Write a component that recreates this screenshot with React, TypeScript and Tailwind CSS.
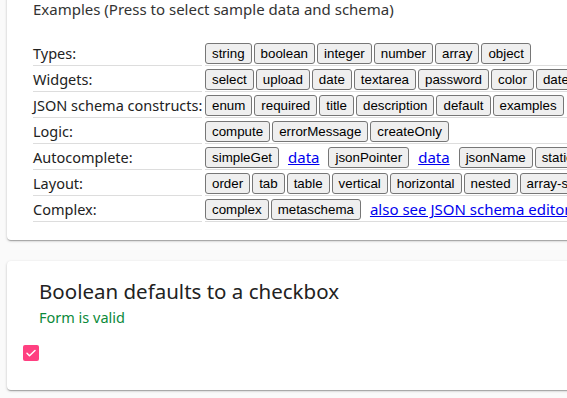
import React from "react";

type Item = { label: string; link?: boolean };

const rows: { name: string; items: Item[] }[] = [
  { name: "Types:", items: ["string", "boolean", "integer", "number", "array", "object"].map((l) => ({ label: l })) },
  { name: "Widgets:", items: ["select", "upload", "date", "textarea", "password", "color", "datetime", "time"].map((l) => ({ label: l })) },
  { name: "JSON schema constructs:", items: ["enum", "required", "title", "description", "default", "examples"].map((l) => ({ label: l })) },
  { name: "Logic:", items: ["compute", "errorMessage", "createOnly"].map((l) => ({ label: l })) },
  {
    name: "Autocomplete:",
    items: [
      { label: "simpleGet" },
      { label: "data", link: true },
      { label: "jsonPointer" },
      { label: "data", link: true },
      { label: "jsonName" },
      { label: "static" },
    ],
  },
  { name: "Layout:", items: ["order", "tab", "table", "vertical", "horizontal", "nested", "array-sort"].map((l) => ({ label: l })) },
  {
    name: "Complex:",
    items: [{ label: "complex" }, { label: "metaschema" }, { label: "also see JSON schema editor", link: true }],
  },
];

const shadow =
  "shadow-[0_1px_3px_rgba(0,0,0,0.2),0_1px_1px_rgba(0,0,0,0.14),0_2px_1px_-1px_rgba(0,0,0,0.12)]";

function SampleButton({ label }: { label: string }) {
  return (
    <button className="h-[21px] shrink-0 rounded-[3px] border border-[#767676] bg-[#efefef] px-[6px] font-['Liberation_Sans',Arial,sans-serif] text-[13.33px] leading-none text-black">
      {label}
    </button>
  );
}

export default function App() {
  return (
    <div className="h-[398px] w-[567px] overflow-hidden bg-[#fafafa] font-['Noto_Sans',sans-serif] text-[#222]">
      <div className="w-[760px] pl-[7px]">
        <div className={`-mt-4 rounded-[4px] bg-white pt-[15px] pb-[18px] pl-[26px] ${shadow}`}>
          <div className="h-[20px] text-[15px] leading-[20px] text-[#333]">
            Examples (Press to select sample data and schema)
          </div>
          <div className="mt-[23px] grid grid-cols-[169px_1fr] gap-x-[3px] gap-y-[2px]">
            {rows.map((row) => (
              <React.Fragment key={row.name}>
                <div className="flex h-[24px] items-center whitespace-nowrap border-b border-[#dddddd] text-[14.5px] text-[#222]">
                  {row.name}
                </div>
                <div className="flex h-[24px] items-center gap-[2px] border-b border-[#dddddd]">
                  {row.items.map((it, i) =>
                    it.link ? (
                      <a key={i} href="#" className="mx-[7px] shrink-0 text-[15px] text-[#0000ee] underline">
                        {it.label}
                      </a>
                    ) : (
                      <SampleButton key={i} label={it.label} />
                    )
                  )}
                </div>
              </React.Fragment>
            ))}
          </div>
        </div>

        <div className={`mt-[21px] h-[129px] rounded-[4px] bg-white ${shadow}`}>
          <div className="pt-[16px] pl-[32px] text-[20.5px] leading-[28px] text-[#222]">Boolean defaults to a checkbox</div>
          <div className="mt-[2px] pl-[32px] text-[14.5px] leading-[20px] text-[#0b8a3a]">Form is valid</div>
          <div className="mt-[18px] pl-[16px]">
            <span className="flex h-[16px] w-[16px] items-center justify-center rounded-[2px] bg-[#ff4081]">
              <svg width="12" height="12" viewBox="0 0 24 24" fill="none" stroke="white" strokeWidth="3" strokeLinecap="round" strokeLinejoin="round">
                <path d="M4 12.5l5 5L20 7" />
              </svg>
            </span>
          </div>
        </div>
      </div>
    </div>
  );
}
